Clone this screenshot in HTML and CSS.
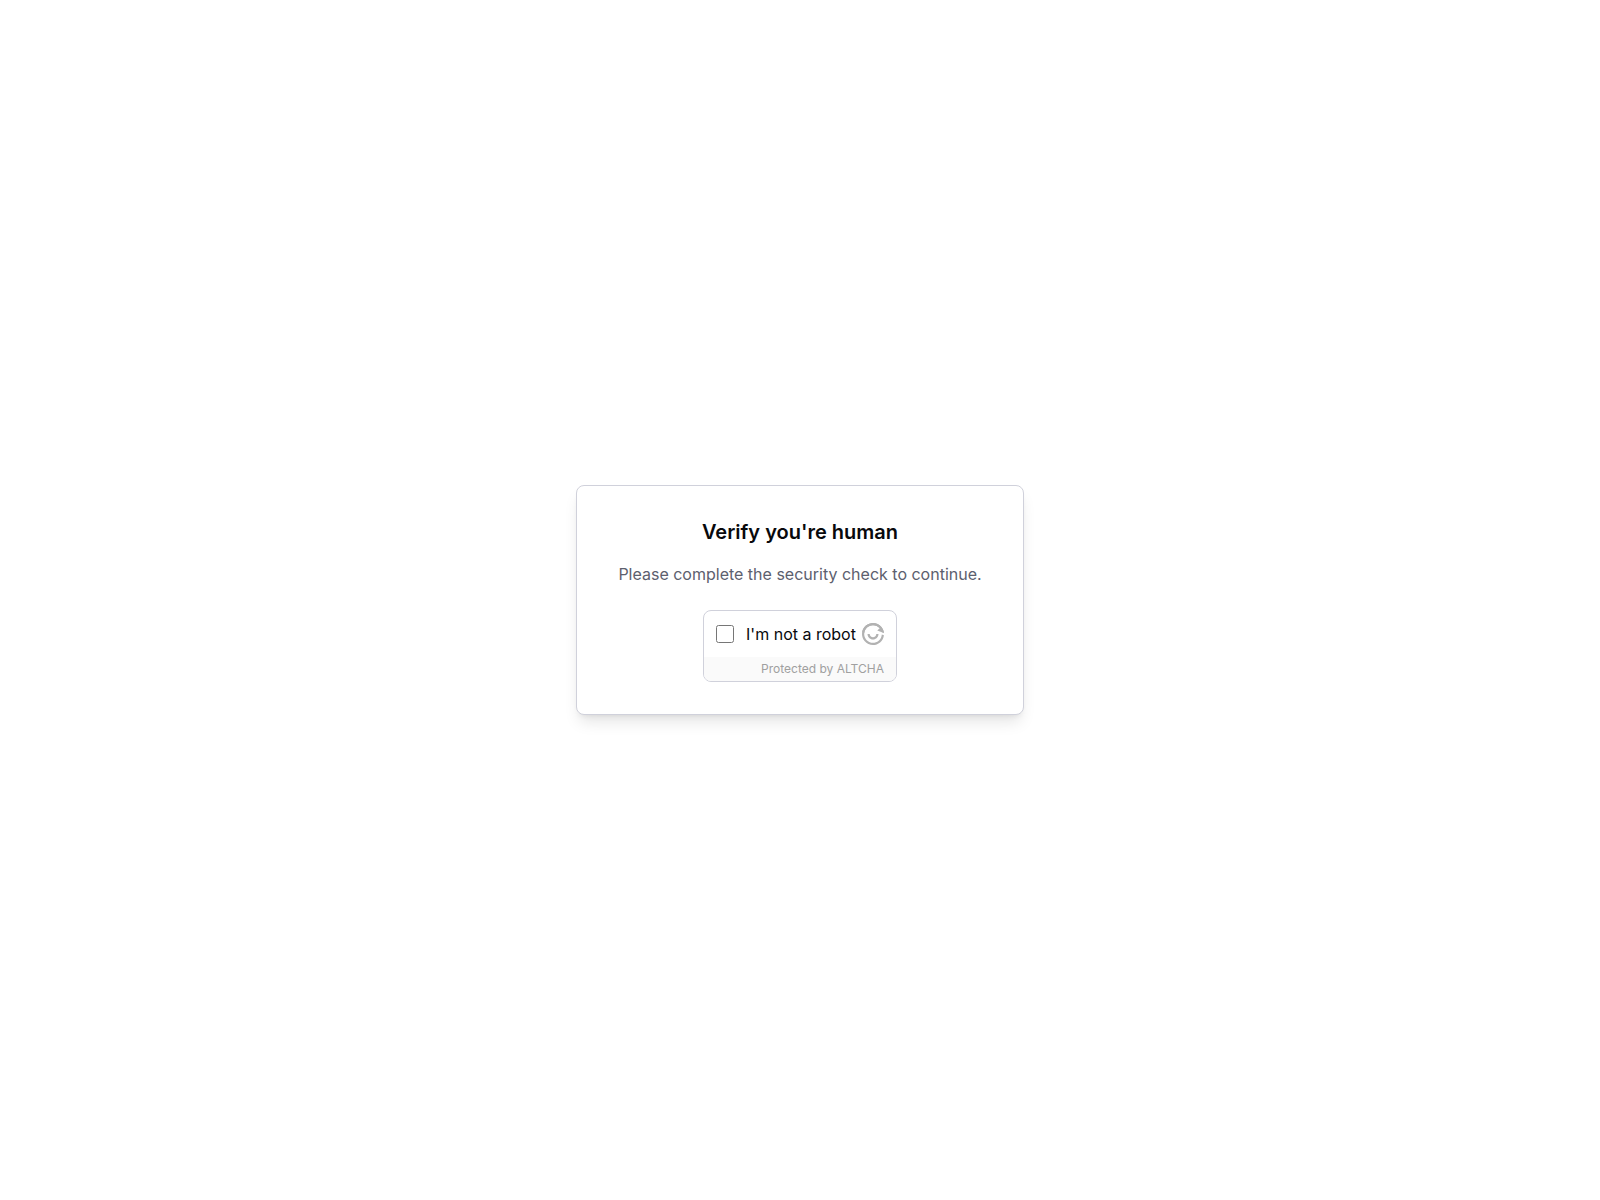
FILE: index.html
```
<!DOCTYPE html>
<html lang="en">
<head>
  <meta charset="UTF-8">
  <meta name="viewport" content="width=device-width, initial-scale=1.0">
  <title>Verify you're human</title>
  <link rel="stylesheet" href="styles.css">
</head>
<body>
  <main class="card">
    <h1 class="title">Verify you're human</h1>
    <p class="description">Please complete the security check to continue.</p>

    <form class="captcha">
      <div class="captcha-main">
        <input type="checkbox" id="captcha-checkbox" class="captcha-checkbox">
        <label for="captcha-checkbox" class="captcha-label">I'm not a robot</label>
        <a href="#" class="captcha-logo" aria-label="ALTCHA">
          <svg width="22" height="22" viewBox="0 0 20 20" fill="currentColor">
            <path d="M2.33955 16.4279C5.88954 20.6586 12.1971 21.2105 16.4279 17.6604C18.4699 15.947 19.6548 13.5911 19.9352 11.1365L17.9886 10.4279C17.8738 12.5624 16.909 14.6459 15.1423 16.1284C11.7577 18.9684 6.71167 18.5269 3.87164 15.1423C1.03163 11.7577 1.4731 6.71166 4.8577 3.87164C8.24231 1.03162 13.2883 1.4731 16.1284 4.8577C16.9767 5.86872 17.5322 7.02798 17.804 8.2324L19.9522 9.01429C19.7622 7.07737 19.0059 5.17558 17.6604 3.57212C14.1104 -0.658624 7.80283 -1.21043 3.57212 2.33956C-0.658625 5.88958 -1.21046 12.1971 2.33955 16.4279Z"/>
            <path d="M3.57212 2.33956C1.65755 3.94607 0.496389 6.11731 0.12782 8.40523L2.04639 9.13961C2.26047 7.15832 3.21057 5.25375 4.8577 3.87164C8.24231 1.03162 13.2883 1.4731 16.1284 4.8577L13.8302 6.78606L19.9633 9.13364C19.7929 7.15555 19.0335 5.20847 17.6604 3.57212C14.1104 -0.658624 7.80283 -1.21043 3.57212 2.33956Z"/>
            <path d="M7 10H5C5 12.7614 7.23858 15 10 15C12.7614 15 15 12.7614 15 10H13C13 11.6569 11.6569 13 10 13C8.3431 13 7 11.6569 7 10Z"/>
          </svg>
        </a>
      </div>
      <div class="captcha-footer">Protected by <a href="#">ALTCHA</a></div>
    </form>
  </main>
</body>
</html>
```
FILE: styles.css
```
* {
  box-sizing: border-box;
}

body {
  margin: 0;
  min-height: 100vh;
  display: flex;
  align-items: center;
  justify-content: center;
  background: #fff;
  color: #08090c;
  font-family: Inter, sans-serif;
  font-size: 16px;
  line-height: 24px;
}

.card {
  width: 100%;
  max-width: 448px;
  padding: 32px;
  display: flex;
  flex-direction: column;
  align-items: center;
  background: #fff;
  border: 1px solid #d0d1db;
  border-radius: 8px;
  box-shadow: 0 10px 15px -3px rgba(0, 0, 0, 0.1), 0 4px 6px -4px rgba(0, 0, 0, 0.1);
  text-align: center;
}

.title {
  margin: 0 0 16px;
  font-size: 20px;
  font-weight: 600;
  line-height: 28px;
}

.description {
  margin: 0 0 24px;
  color: #5c606e;
}

/* captcha widget */
.captcha {
  overflow: hidden;
  border: 1px solid #d0d1db;
  border-radius: 8px;
}

.captcha-main {
  display: flex;
  align-items: center;
  padding: 12px;
}

.captcha-checkbox {
  width: 18px;
  height: 18px;
  margin: 0 12px 0 0;
}

.captcha-label {
  margin-right: 6px;
  line-height: 22px;
}

.captcha-logo {
  display: flex;
  color: #b2b2b2;
}

.captcha-footer {
  padding: 4px 12px;
  background: #fafafa;
  color: #a0a0a0;
  font-size: 12px;
  line-height: 16px;
  text-align: right;
}

.captcha-footer a {
  color: inherit;
  text-decoration: none;
}
```
